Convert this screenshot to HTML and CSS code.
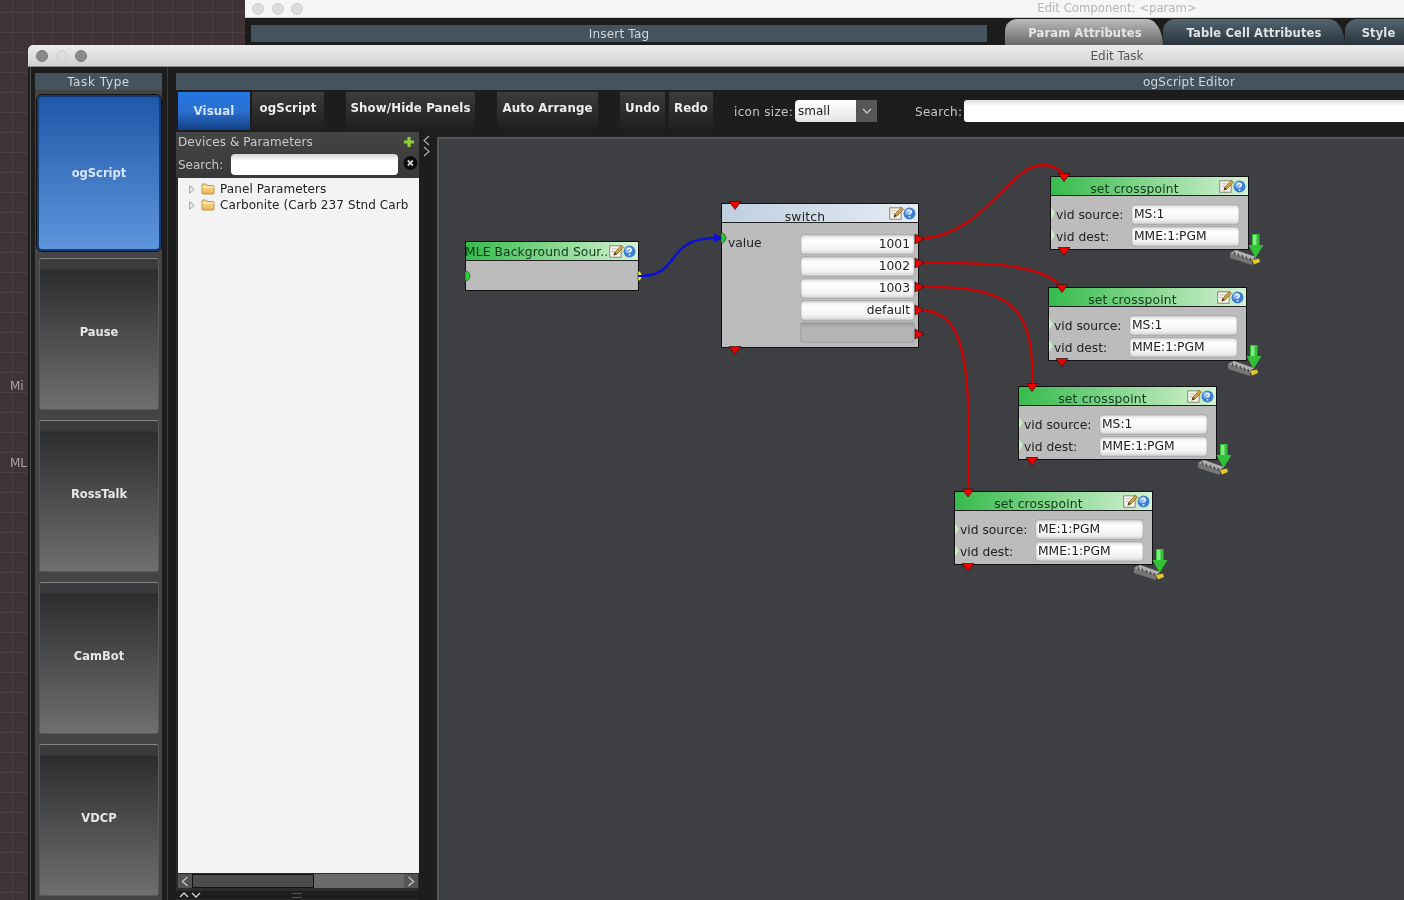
FILE: index.html
```html
<!DOCTYPE html>
<html lang="en">
<head>
<meta charset="utf-8">
<title>Edit Task</title>
<link rel="stylesheet" href="styles.css">
</head>
<body>
<svg class="defs" width="0" height="0" aria-hidden="true">
  <defs>
    <linearGradient id="folderGrad" x1="0" y1="0" x2="0" y2="1"><stop offset="0" stop-color="#fbe3a0"/><stop offset="1" stop-color="#eeb54e"/></linearGradient>
    <symbol id="folder" viewBox="0 0 14 12"><path d="M1 3V2q0-1 1-1h3l1 1.500h6q1 0 1 1V10q0 1-1 1H2q-1 0-1-1z" fill="url(#folderGrad)" stroke="#a8843f" stroke-width=".8"/><path d="M1.500 4.200h11" stroke="#fff6d8" stroke-width=".8"/></symbol>
    <symbol id="edit" viewBox="0 0 14 13"><rect x=".7" y="1.700" width="10.600" height="10.600" fill="#f8f6ec" stroke="#77746a" stroke-width=".8"/><path d="M2.500 4.500h5M2.500 7h3" stroke="#b9b6a8" stroke-width=".8"/><path d="M4.500 10.500l1-2.800L11.500 1.200l2 1.800-6 6.300z" fill="#d8a23f" stroke="#6d5322" stroke-width=".6"/><path d="M4.500 10.500l1-2.800 1.700 1.600z" fill="#333"/></symbol>
    <symbol id="help" viewBox="0 0 12 12"><circle cx="6" cy="6" r="5.500" fill="#3f7fd0"/><circle cx="5" cy="4.500" r="3" fill="#8fb9ea"/><path d="M4.300 4.600q.2-1.400 1.800-1.400t1.700 1.300q0 .8-1 1.300-.7.400-.7 1.200" fill="none" stroke="#fff" stroke-width="1.100"/><circle cx="6.100" cy="9" r=".8" fill="#fff"/></symbol>
    <symbol id="download" viewBox="0 0 34 32">
      <path d="M0 20l22 7v5L0 25z" fill="#767676"/>
      <path d="M0 20l6-3 20 7-4 3z" fill="#b0b0b0"/>
      <path d="M4 19l1 3M8 20.500l1 3M12 22l1 3M16 23.500l1 3M20 25l1 3" stroke="#4a4a4a" stroke-width="1.400"/>
      <path d="M22 27l7-1.500 1 3.500-6 2.500z" fill="#e3c62a"/>
      <path d="M22 1h7.500v11h4L25.500 25 18.500 12H22z" fill="#32c038"/>
      <path d="M23 2h3.500v10H23z" fill="#83ea85"/>
    </symbol>
  </defs>
</svg>

<main class="desktop">
  <span class="desk-label desk-label-mi">Mi</span>
  <span class="desk-label desk-label-ml">ML</span>

  <section class="window back-window">
    <header class="titlebar back-titlebar">
      <div class="lights"><i></i><i></i><i></i></div>
      <span class="title">Edit Component: &lt;param&gt;</span>
    </header>
    <div class="back-body">
      <div class="back-left"><div class="panel-head">Insert Tag</div></div>
      <div class="tabs">
        <span class="tab tab-active">Param Attributes</span>
        <span class="tab tab-table">Table Cell Attributes</span>
        <span class="tab tab-style">Style</span>
      </div>
    </div>
  </section>

  <section class="window front-window">
    <header class="titlebar front-titlebar">
      <div class="lights"><i class="dim"></i><i></i><i class="dim"></i></div>
      <span class="title">Edit Task</span>
    </header>
    <div class="front-body">
      <aside class="task-panel">
        <div class="panel-head task-head">Task Type</div>
        <div class="task-list">
          <button class="task task-on">ogScript</button>
          <button class="task">Pause</button>
          <button class="task">RossTalk</button>
          <button class="task">CamBot</button>
          <button class="task">VDCP</button>
        </div>
      </aside>

      <div class="editor">
        <div class="panel-head">ogScript Editor</div>
        <div class="toolbar">
          <button class="tool tool-on tool-visual">Visual</button>
          <button class="tool tool-script">ogScript</button>
          <button class="tool tool-show">Show/Hide Panels</button>
          <button class="tool tool-arrange">Auto Arrange</button>
          <button class="tool tool-undo">Undo</button>
          <button class="tool tool-redo">Redo</button>
          <span class="tool-label label-size">icon size:</span>
          <span class="select"><span class="select-value">small</span><span class="select-arrow"><svg width="10" height="6" viewBox="0 0 10 6"><path d="M1 1l4 4 4-4" fill="none" stroke="#c8c8c8" stroke-width="1.300"/></svg></span></span>
          <span class="tool-label label-search">Search:</span>
          <span class="search-main"></span>
        </div>

        <div class="workspace">
          <div class="devices">
            <div class="devices-head">
              <div class="devices-title"><span>Devices &amp; Parameters</span><svg class="plus" width="12" height="12" viewBox="0 0 12 12"><path d="M6 1v10M1 6h10" stroke="#8fd13a" stroke-width="3.200"/></svg></div>
              <div class="devices-search"><span class="search-text">Search:</span><span class="search-small"></span><svg class="clear" width="16" height="16" viewBox="0 0 16 16"><circle cx="8" cy="8" r="7.500" fill="#0c0c0c"/><path d="M5.300 5.300l5.400 5.400M10.700 5.300l-5.400 5.400" stroke="#c8c8c8" stroke-width="2"/></svg></div>
            </div>
            <div class="tree">
              <div class="tree-row"><svg class="twist" width="6" height="9" viewBox="0 0 6 9"><path d="M.7.800l4.500 3.700L.7 8.200z" fill="#f3f3f3" stroke="#9a9a9a"/></svg><svg class="folder" width="14" height="12"><use href="#folder"/></svg><span>Panel Parameters</span></div>
              <div class="tree-row"><svg class="twist" width="6" height="9" viewBox="0 0 6 9"><path d="M.7.800l4.500 3.700L.7 8.200z" fill="#f3f3f3" stroke="#9a9a9a"/></svg><svg class="folder" width="14" height="12"><use href="#folder"/></svg><span>Carbonite (Carb 237 Stnd Carb</span></div>
            </div>
            <div class="hscroll">
              <span class="scroll-btn"><svg width="8" height="11" viewBox="0 0 8 11"><path d="M6.500 1L1.500 5.500l5 4.500" fill="none" stroke="#bbb" stroke-width="1.500"/></svg></span>
              <span class="scroll-thumb"></span>
              <span class="scroll-track"></span>
              <span class="scroll-btn"><svg width="8" height="11" viewBox="0 0 8 11"><path d="M1.500 1l5 4.500-5 4.500" fill="none" stroke="#bbb" stroke-width="1.500"/></svg></span>
            </div>
            <div class="devices-foot">
              <svg width="22" height="7" viewBox="0 0 22 7"><path d="M1 6l4-4 4 4M13 2l4 4 4-4" fill="none" stroke="#d8d8d8" stroke-width="1.300"/></svg>
              <span class="grip"></span>
            </div>
          </div>

          <div class="splitter">
            <svg width="7" height="22" viewBox="0 0 7 22"><path d="M6 1L1 5.500 6 10M1 12l5 4.500L1 21" fill="none" stroke="#aaa" stroke-width="1.200"/></svg>
          </div>

          <div class="canvas">
            <article class="node node-mle">
              <header class="node-head head-green head-left"><span class="node-name">MLE Background Sour...</span><span class="node-icons"><svg width="15" height="14"><use href="#edit"/></svg><svg width="13" height="13"><use href="#help"/></svg></span></header>
            </article>

            <article class="node node-switch">
              <header class="node-head head-blue"><span class="node-name">switch</span><span class="node-icons"><svg width="15" height="14"><use href="#edit"/></svg><svg width="13" height="13"><use href="#help"/></svg></span></header>
              <div class="switch-body">
                <span class="switch-label">value</span>
                <div class="switch-cases">
                  <span class="field field-right">1001</span>
                  <span class="field field-right">1002</span>
                  <span class="field field-right">1003</span>
                  <span class="field field-right">default</span>
                  <span class="field field-empty"></span>
                </div>
              </div>
            </article>

            <article class="node node-set node-s1">
              <header class="node-head head-green"><span class="node-name">set crosspoint</span><span class="node-icons"><svg width="15" height="14"><use href="#edit"/></svg><svg width="13" height="13"><use href="#help"/></svg></span></header>
              <div class="set-body"><span>vid source:</span><span class="field">MS:1</span><span>vid dest:</span><span class="field">MME:1:PGM</span></div>
            </article>
            <article class="node node-set node-s2">
              <header class="node-head head-green"><span class="node-name">set crosspoint</span><span class="node-icons"><svg width="15" height="14"><use href="#edit"/></svg><svg width="13" height="13"><use href="#help"/></svg></span></header>
              <div class="set-body"><span>vid source:</span><span class="field">MS:1</span><span>vid dest:</span><span class="field">MME:1:PGM</span></div>
            </article>
            <article class="node node-set node-s3">
              <header class="node-head head-green"><span class="node-name">set crosspoint</span><span class="node-icons"><svg width="15" height="14"><use href="#edit"/></svg><svg width="13" height="13"><use href="#help"/></svg></span></header>
              <div class="set-body"><span>vid source:</span><span class="field">MS:1</span><span>vid dest:</span><span class="field">MME:1:PGM</span></div>
            </article>
            <article class="node node-set node-s4">
              <header class="node-head head-green"><span class="node-name">set crosspoint</span><span class="node-icons"><svg width="15" height="14"><use href="#edit"/></svg><svg width="13" height="13"><use href="#help"/></svg></span></header>
              <div class="set-body"><span>vid source:</span><span class="field">ME:1:PGM</span><span>vid dest:</span><span class="field">MME:1:PGM</span></div>
            </article>

            <svg class="wires" width="966" height="763" viewBox="438 137 966 763">
              <g fill="none" stroke="#cf0000" stroke-width="2.300">
                <path d="M918 239C985 236 1008 166 1042 165C1054 165 1062 170 1064 178"/>
                <path d="M918 263C965 263 1045 260 1062 289"/>
                <path d="M918 287C1005 286 1036 300 1032 388"/>
                <path d="M918 310C960 310 973 345 968 492"/>
              </g>
              <path d="M640 276C682 276 664 238 716 238" fill="none" stroke="#0a10d8" stroke-width="2.500"/>
              <path d="M714 233.500l9 4.500-9 4.500z" fill="#0a10d8"/>
              <g fill="#ee0000" stroke="#301010" stroke-width=".7">
                <path d="M729 201.500h12l-6 8z"/><path d="M729 346.500h12l-6 8z"/>
                <path d="M915 234v10l9-5z"/><path d="M915 258v10l9-5z"/><path d="M915 282v10l9-5z"/><path d="M915 305v10l9-5z"/><path d="M915 329v10l9-5z"/>
                <path d="M1058 173.500h12l-6 8z"/><path d="M1058 247.500h12l-6 8z"/>
                <path d="M1056 284.500h12l-6 8z"/><path d="M1056 358.500h12l-6 8z"/>
                <path d="M1026 383.500h12l-6 8z"/><path d="M1026 457.500h12l-6 8z"/>
                <path d="M962 489h12l-6 8z"/><path d="M962 563.500h12l-6 8z"/>
              </g>
              <g stroke="#222" stroke-width=".6">
                <path d="M465 271a5 5 0 0 1 0 10z" fill="#27d42f"/>
                <path d="M638 271a4 5 0 0 1 0 10z" fill="#ecec3a"/>
                <path d="M721 233a5 5 0 0 1 0 10z" fill="#27c83a"/>
              </g>
              <path d="M638 276h5" stroke="#0a10d8" stroke-width="2"/>
              <g fill="#c4f2bc">
                <path d="M1051 207l4 6-4 6z"/><path d="M1051 229l4 6-4 6z"/>
                <path d="M1049 318l4 6-4 6z"/><path d="M1049 340l4 6-4 6z"/>
                <path d="M1019 417l4 6-4 6z"/><path d="M1019 439l4 6-4 6z"/>
                <path d="M955 523l4 6-4 6z"/><path d="M955 545l4 6-4 6z"/>
              </g>
              <use href="#download" x="1230" y="233" width="34" height="32"/>
              <use href="#download" x="1228" y="344" width="34" height="32"/>
              <use href="#download" x="1198" y="443" width="34" height="32"/>
              <use href="#download" x="1134" y="548" width="34" height="32"/>
            </svg>
          </div>
        </div>
      </div>
    </div>
  </section>
</main>
</body>
</html>
```

FILE: styles.css
```css
* { box-sizing: border-box; }
html, body { margin: 0; height: 100%; overflow: hidden; }
body {
  width: 1404px;
  height: 900px;
  font-family: "DejaVu Sans", sans-serif;
  font-size: 12px;
  color: #222;
  background: #3c2f31;
}
.defs { position: absolute; }
.desktop {
  position: relative;
  width: 1404px;
  height: 900px;
  overflow: hidden;
  filter: blur(.35px);
  background-color: #403335;
  background-image:
    linear-gradient(#4b3f41 1px, transparent 1px),
    linear-gradient(90deg, #4b3f41 1px, transparent 1px);
  background-size: 20px 20px;
  background-position: 12px 12px;
}
.desk-label { position: absolute; left: 10px; color: #aaa4a4; font-size: 12px; }
.desk-label-mi { top: 379px; }
.desk-label-ml { top: 456px; }

.window { position: absolute; }
.back-window { left: 245px; top: 0; width: 1744px; height: 46px; background: #1c1c1c; }
.front-window { left: 28px; top: 45px; width: 2178px; height: 880px; background: #1d1d1d; border-radius: 5px 5px 0 0; overflow: hidden; }

.titlebar { position: relative; display: flex; align-items: center; justify-content: center; }
.back-titlebar { height: 18px; background: #f6f6f6; border-bottom: 1px solid #cfcfcf; color: #b5b5b5; padding-bottom: 2px; }
.back-titlebar .title { font-size: 11.700px; }
.front-titlebar { height: 22px; background: linear-gradient(#ededed, #d2d2d2); border-bottom: 1px solid #8c8c8c; color: #555; }
.lights { position: absolute; left: 7px; top: 50%; transform: translateY(-50%); display: flex; gap: 7.500px; }
.lights i { display: block; width: 12px; height: 12px; border-radius: 50%; background: #dcdcdc; border: 1px solid #cfcfcf; }
.lights i.dim { background: #8a8a8a; border-color: #7a7a7a; }
.front-titlebar .lights { left: 8px; }
.title { font-size: 12px; white-space: nowrap; }

.panel-head {
  height: 17px;
  line-height: 18px;
  text-align: center;
  background: #43545f;
  color: #d2d7da;
  font-size: 12px;
  letter-spacing: .2px;
  white-space: nowrap;
}
.task-head { letter-spacing: .6px; }

.back-body { display: flex; height: 28px; padding-top: 7px; }
.back-left { width: 748px; padding-left: 6px; padding-right: 6px; flex: none; }
.tabs { display: flex; margin-top: -7px; margin-left: 12px; height: 28px; align-items: flex-end; }
.tab {
  height: 27px;
  display: flex;
  align-items: center;
  justify-content: center;
  font-weight: bold;
  color: #dfe3e6;
  font-size: 11.500px;
  letter-spacing: .12px;
  white-space: nowrap;
  border-radius: 12px 16px 0 0 / 12px 27px 0 0;
}
.tab-active { width: 158px; padding-left: 2px; background: linear-gradient(#bbb, #666); color: #e6e6e6; }
.tab-table { width: 182px; background: linear-gradient(#53656f, #27323a); }
.tab-style { width: 100px; padding-right: 33px; background: linear-gradient(#53656f, #27323a); }

.front-body { display: flex; height: 858px; padding-left: 2px; }
.task-panel {
  width: 133px;
  flex: none;
  padding: 6px 1px 0 4px;
  background: #1d1d1d;
  border-left: 1px solid #4a4a4a;
}
.task-list {
  display: flex;
  flex-direction: column;
  gap: 10px;
  background: #444;
  padding: 5px 4px;
}
.task {
  height: 152px;
  width: 120px;
  flex: none;
  border: 1px solid #5a5a5a;
  border-top-color: #858585;
  border-radius: 3px;
  color: #e6e6e6;
  font: bold 11.500px "DejaVu Sans", sans-serif;
  background: linear-gradient(#3b3b3d 0, #3b3b3d 10px, #2c2d2f 11px, #6f6f70 100%);
  padding: 0 0 4px;
}
.task-on {
  height: 156px;
  margin: 0 -2px -3px;
  width: 124px;
  border: 2px solid #143d78;
  border-radius: 5px;
  outline: 1px solid #111;
  color: #d8e6f6;
  background: linear-gradient(#1f58a8, #5e95dc);
  padding-bottom: 0;
}

.editor { flex: 1; padding: 6px 0 0 6px; min-width: 0; background: #1d1d1d; border-left: 1px solid #3a3a3a; margin-left: 4px; }
.editor > .panel-head { margin: 0 4px 0 2px; }
.toolbar { display: flex; align-items: flex-start; height: 42px; padding-top: 2px; padding-left: 4px; }
.tool {
  height: 38px;
  flex: none;
  border: 0;
  padding: 0 0 6px;
  color: #eee;
  font: bold 11.800px "DejaVu Sans", sans-serif;
  letter-spacing: .1px;
  white-space: nowrap;
  background: linear-gradient(#3c3c3c, #1e1e1e);
}
.tool-visual { width: 72px; padding: 0; margin-right: 2px; color: #cfe2fa; background: linear-gradient(#2476e2, #2a6fcf 50%, #143f86); }
.tool-script { width: 72px; margin-right: 22px; }
.tool-show { width: 129px; margin-right: 22px; }
.tool-arrange { width: 101px; margin-right: 22px; }
.tool-undo { width: 45px; margin-right: 4px; }
.tool-redo { width: 44px; margin-right: 21px; }
.tool-label { color: #c6c6c6; font-size: 12px; letter-spacing: .3px; white-space: nowrap; line-height: 22px; margin-top: 9px; flex: none; }
.label-size { width: 61px; }
.select { display: flex; width: 82px; height: 22px; margin-top: 8px; flex: none; }
.select-value { flex: 1; background: linear-gradient(#fff, #e4e4e4); border-radius: 4px 0 0 4px; color: #222; padding: 4px 0 0 3px; }
.select-arrow { width: 21px; background: #565656; display: flex; align-items: center; justify-content: center; }
.label-search { margin-left: 38px; width: 49px; }
.search-main { width: 1200px; height: 22px; margin-top: 8px; background: linear-gradient(#dedede, #fff 30%); border-radius: 3px; flex: none; }

.workspace { display: flex; height: 790px; margin-left: 2px; }
.devices { width: 243px; flex: none; display: flex; flex-direction: column; background: #2a2a2a; }
.devices-head { height: 46px; background: linear-gradient(#454545, #383838); color: #c9c9c9; padding: 1px 1px 0 2px; }
.devices-title { display: flex; justify-content: space-between; align-items: center; height: 18px; padding-right: 3px; letter-spacing: .1px; }
.devices-search { display: flex; align-items: center; height: 24px; margin-top: 1px; }
.search-text { margin-top: 2px; }
.search-small { width: 167px; height: 21px; margin: 0 5px 0 8px; background: linear-gradient(#d5d5d5, #fff 35%); border-radius: 4px; flex: none; }
.clear { margin-top: -2px; }
.tree { flex: none; height: 695px; background: #f3f3f3; padding: 3px 0 0 11px; color: #222; margin-left: 2px; letter-spacing: .1px; }
.tree-row { display: flex; align-items: center; height: 16px; white-space: nowrap; }
.twist { margin-right: 6px; flex: none; }
.folder { margin-right: 5px; flex: none; }
.hscroll { display: flex; height: 18px; padding: 1px 1px 3px 2px; background: #2c2c2c; }
.scroll-btn { width: 14px; display: flex; align-items: center; justify-content: center; background: #545454; flex: none; }
.scroll-thumb { width: 122px; background: #4c4c4c; border: 1px solid #111; flex: none; }
.scroll-track { flex: 1; background: #696969; }
.devices-foot { position: relative; height: 8px; background: #1d1d1d; padding-left: 3px; }
.devices-foot svg { display: block; }
.grip { position: absolute; left: 116px; top: 2px; width: 10px; height: 5px; border-top: 1px solid #555; border-bottom: 1px solid #555; }
.splitter { width: 18px; flex: none; padding: 3px 0 0 4px; }
.splitter svg { display: block; }

.canvas { position: relative; flex: 1; margin-top: 5px; background: #3e3f42; border-top: 2px solid #555; border-left: 2px solid #555; min-width: 0; }
.node { position: absolute; background: #bcbcbc; border: 1px solid #111; display: flex; flex-direction: column; font-size: 12.300px; }
.node-mle { left: 26px; top: 102px; width: 174px; height: 50px; overflow: hidden; }
.node-switch { left: 282px; top: 64px; width: 198px; height: 145px; }
.node-set { width: 199px; height: 74px; }
.node-s1 { left: 611px; top: 37px; }
.node-s2 { left: 609px; top: 148px; }
.node-s3 { left: 579px; top: 247px; }
.node-s4 { left: 515px; top: 352px; }

.node-head { position: relative; height: 19px; flex: none; display: flex; justify-content: center; align-items: flex-end; border-bottom: 1px solid #222; line-height: 11px; letter-spacing: .2px; padding-right: 30px; white-space: nowrap; }
.head-green { background: linear-gradient(90deg, #36bb4c, #d6f2d3); color: #123a1a; }
.head-blue { background: linear-gradient(90deg, #bfcfe0, #e6ecf4); color: #222; line-height: 9px; overflow: hidden; }
.head-left { justify-content: flex-start; padding-right: 0; line-height: 16px; letter-spacing: .1px; }
.head-left .node-name { margin-left: -1px; }
.node-icons { position: absolute; right: 2px; top: 2px; display: flex; align-items: center; }
.node-icons svg { display: block; }
.node-icons svg + svg { margin-left: -1px; }

.switch-body { display: flex; flex: 1; padding: 11px 3px 0 6px; justify-content: space-between; }
.switch-label { margin-top: 2px; }
.switch-cases { display: flex; flex-direction: column; gap: 1px; width: 115px; }
.field {
  display: block;
  height: 21px;
  line-height: 20px;
  padding: 0 3px;
  color: #222;
  border-radius: 4px;
  background: linear-gradient(#d8d8d8, #fff 28%, #f3f3f3 72%, #d4d4d4);
  box-shadow: inset 0 0 2px 1px #9e9e9e;
  font-size: 12.300px;
}
.field-right { text-align: right; padding-right: 5px; }
.field-empty { background: linear-gradient(#999, #b5b5b5 30%); box-shadow: inset 0 0 2px 1px #a2a2a2; }

.set-body { display: grid; grid-template-columns: 75px 109px; grid-auto-rows: 21px; row-gap: 1px; padding: 8px 0 0 5px; align-items: center; white-space: nowrap; }

.wires { position: absolute; left: -1px; top: -2px; overflow: visible; pointer-events: none; }
```
